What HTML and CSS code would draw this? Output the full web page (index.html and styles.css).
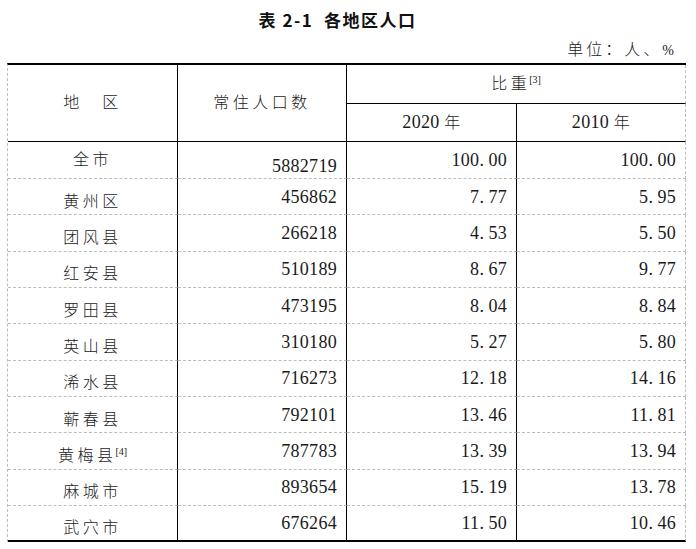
FILE: index.html
```html
<!DOCTYPE html>
<html lang="zh-CN">
<head>
<meta charset="utf-8">
<title>表 2-1 各地区人口</title>
<link rel="stylesheet" href="styles.css">
</head>
<body>
<div class="page">
  <h1 class="title">表 2-1&nbsp;&nbsp;各地区人口</h1>
  <div class="unit">单位：人、<span class="pct">%</span></div>
  <table class="tbl">
    <colgroup>
      <col class="c1"><col class="c2"><col class="c3"><col class="c4">
    </colgroup>
    <thead>
      <tr class="hr1">
        <th rowspan="2" class="hcell">地　区</th>
        <th rowspan="2" class="hcell">常住人口数</th>
        <th colspan="2" class="hcell last share">比重<sup class="note">[3]</sup></th>
      </tr>
      <tr class="hr2">
        <th class="hcell year">2020 <span class="cjk">年</span></th>
        <th class="hcell year last">2010 <span class="cjk">年</span></th>
      </tr>
    </thead>
    <tbody>
      <tr class="first">
        <td class="name first-name">全市</td>
        <td class="num pop-first">5882719</td>
        <td class="num">100<span class="dot">.</span>00</td>
        <td class="num last">100<span class="dot">.</span>00</td>
      </tr>
      <tr>
        <td class="name">黄州区</td>
        <td class="num">456862</td>
        <td class="num">7<span class="dot">.</span>77</td>
        <td class="num last">5<span class="dot">.</span>95</td>
      </tr>
      <tr>
        <td class="name">团风县</td>
        <td class="num">266218</td>
        <td class="num">4<span class="dot">.</span>53</td>
        <td class="num last">5<span class="dot">.</span>50</td>
      </tr>
      <tr>
        <td class="name">红安县</td>
        <td class="num">510189</td>
        <td class="num">8<span class="dot">.</span>67</td>
        <td class="num last">9<span class="dot">.</span>77</td>
      </tr>
      <tr>
        <td class="name">罗田县</td>
        <td class="num">473195</td>
        <td class="num">8<span class="dot">.</span>04</td>
        <td class="num last">8<span class="dot">.</span>84</td>
      </tr>
      <tr>
        <td class="name">英山县</td>
        <td class="num">310180</td>
        <td class="num">5<span class="dot">.</span>27</td>
        <td class="num last">5<span class="dot">.</span>80</td>
      </tr>
      <tr>
        <td class="name">浠水县</td>
        <td class="num">716273</td>
        <td class="num">12<span class="dot">.</span>18</td>
        <td class="num last">14<span class="dot">.</span>16</td>
      </tr>
      <tr>
        <td class="name">蕲春县</td>
        <td class="num">792101</td>
        <td class="num">13<span class="dot">.</span>46</td>
        <td class="num last">11<span class="dot">.</span>81</td>
      </tr>
      <tr>
        <td class="name">黄梅县<sup class="note">[4]</sup></td>
        <td class="num">787783</td>
        <td class="num">13<span class="dot">.</span>39</td>
        <td class="num last">13<span class="dot">.</span>94</td>
      </tr>
      <tr>
        <td class="name">麻城市</td>
        <td class="num">893654</td>
        <td class="num">15<span class="dot">.</span>19</td>
        <td class="num last">13<span class="dot">.</span>78</td>
      </tr>
      <tr class="lastrow">
        <td class="name">武穴市</td>
        <td class="num">676264</td>
        <td class="num">11<span class="dot">.</span>50</td>
        <td class="num last">10<span class="dot">.</span>46</td>
      </tr>
    </tbody>
  </table>
</div>
</body>
</html>
```
FILE: styles.css
```css
html, body {
  margin: 0;
  padding: 0;
  background: #ffffff;
}

body {
  font-family: "Liberation Serif", "Noto Sans CJK SC", serif;
  color: #1a1a1a;
}

.page {
  padding-left: 7px;
  width: 679px;
}

.title {
  margin: 8px 0 0 0;
  padding-right: 18px;
  font-family: "Noto Sans CJK SC", sans-serif;
  font-size: 17px;
  font-weight: 700;
  letter-spacing: 1.5px;
  line-height: 24px;
  text-align: center;
  color: #111;
}

.unit {
  margin-top: 8px;
  padding-right: 12px;
  font-size: 16px;
  letter-spacing: 3px;
  line-height: 20px;
  text-align: right;
  font-weight: 300;
}

.unit .pct {
  font-size: 14px;
  letter-spacing: 0;
}

.tbl {
  margin-top: 2px;
  border-collapse: separate;
  border-spacing: 0;
  table-layout: fixed;
  width: 679px;
  border-top: 2px solid #000;
  border-left: 1px dashed #bdbdbd;
}

.c1 { width: 170px; }
.c2 { width: 169px; }
.c3 { width: 170px; }
.c4 { width: 169px; }

.tbl th,
.tbl td {
  padding: 0;
  box-sizing: border-box;
  border-right: 1px solid #000;
  vertical-align: middle;
}

.tbl th.last,
.tbl td.last {
  border-right: 1px dashed #bdbdbd;
}

.hcell {
  font-weight: 300;
  font-size: 16px;
  letter-spacing: 3.5px;
  line-height: 20px;
  text-align: center;
  border-bottom: 1px solid #000;
}

.hr1 { height: 39px; }
.hr2 { height: 38px; }

.share {
  padding-top: 2px;
}

.year {
  font-size: 18px;
  letter-spacing: 0.3px;
  padding-top: 2px;
}

.year .cjk {
  font-size: 16px;
}

.note {
  font-family: "Liberation Serif", serif;
  font-size: 10px;
  letter-spacing: 0;
  vertical-align: top;
  position: relative;
  top: -4px;
  margin-left: -1px;
}

tbody tr { height: 36.33px; }
tbody tr.first { height: 37px; }

.tbl td {
  border-bottom: 1px dashed #bdbdbd;
}

.tbl tr.lastrow td {
  border-bottom: 2px solid #000;
}

.name {
  font-weight: 300;
  font-size: 16px;
  letter-spacing: 3.5px;
  line-height: 20px;
  text-align: center;
  padding-top: 10px !important;
}

.name.first-name {
  padding-top: 0 !important;
}

.num {
  font-size: 18px;
  letter-spacing: 0.3px;
  line-height: 20px;
  text-align: right;
  padding-right: 9px !important;
}

.num.pop-first {
  padding-top: 12px !important;
}

.dot {
  display: inline-block;
  width: 9px;
  text-align: left;
}
```
